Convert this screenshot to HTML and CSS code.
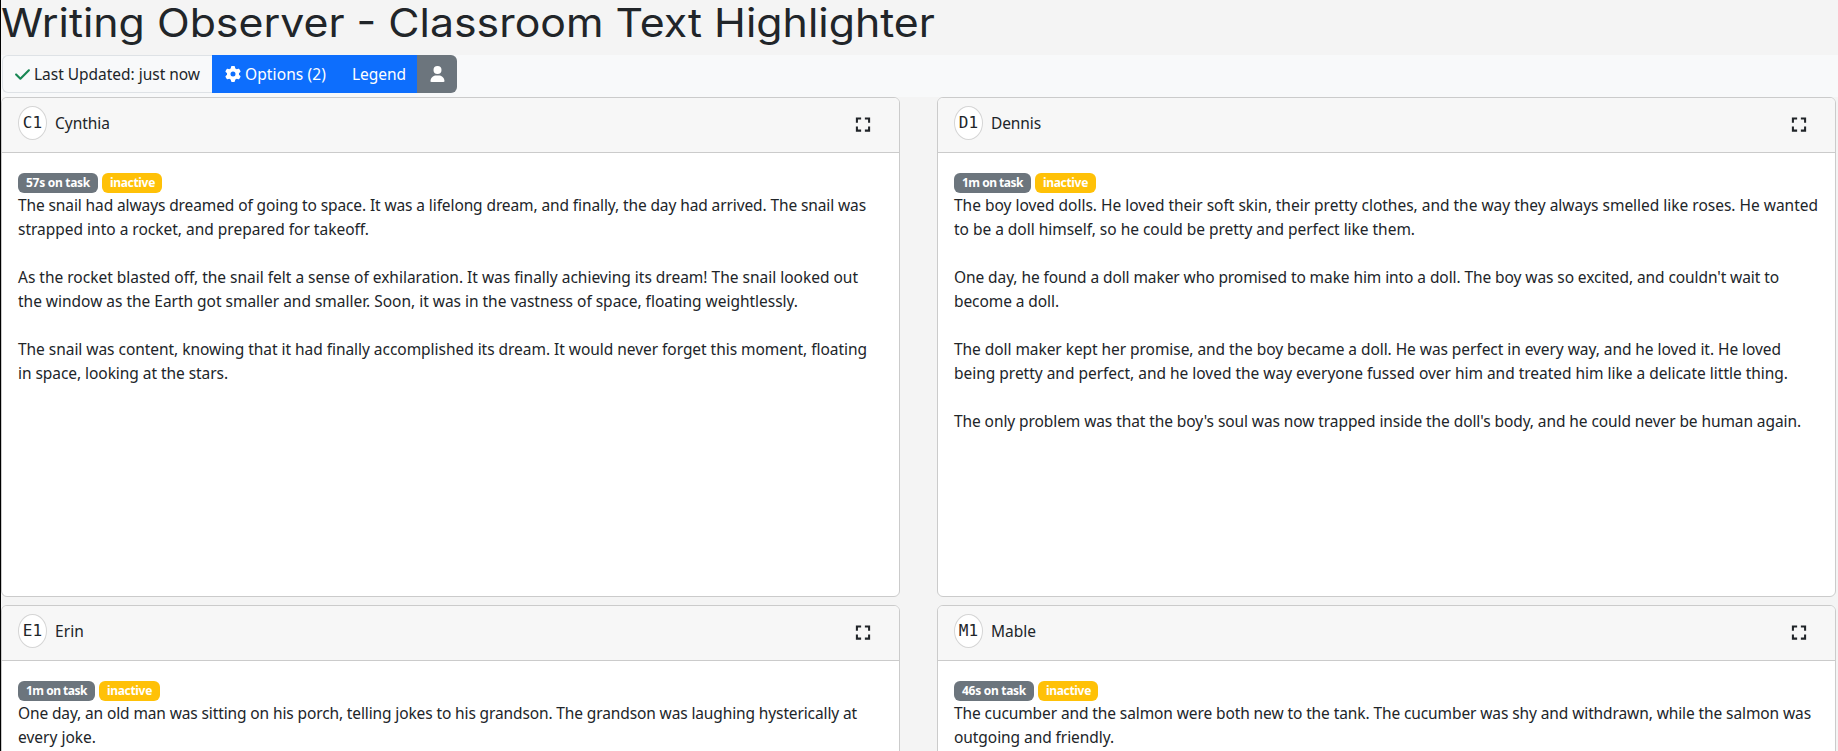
FILE: index.html
```html
<!DOCTYPE html>
<html lang="en">
<head>
<meta charset="utf-8">
<title>Writing Observer</title>
<link rel="stylesheet" href="styles.css">
</head>
<body>
<h1 class="title"><span class="title-text">Writing Observer - Classroom Text Highlighter</span></h1>
<div class="toolbar">
  <div class="status">
    <svg class="check" viewBox="0 0 448 512"><path fill="currentColor" d="M438.600 105.400c12.500 12.500 12.500 32.800 0 45.300l-256 256c-12.500 12.500-32.800 12.500-45.300 0l-128-128c-12.500-12.500-12.500-32.800 0-45.300s32.800-12.500 45.300 0L160 338.700 393.400 105.400c12.500-12.500 32.800-12.500 45.300 0z"/></svg>
    <span class="fit" data-width="166">Last Updated: just now</span>
  </div>
  <div class="btn options">
    <svg class="gear" viewBox="0 0 512 512"><path fill="currentColor" d="M495.900 166.600c3.200 8.700 .5 18.400-6.400 24.600l-43.300 39.400c1.100 8.300 1.700 16.800 1.700 25.400s-.6 17.100-1.700 25.400l43.300 39.400c6.900 6.200 9.600 15.900 6.400 24.600c-4.400 11.900-9.700 23.300-15.800 34.300l-4.700 8.100c-6.600 11-14 21.400-22.100 31.200c-5.900 7.200-15.700 9.600-24.500 6.800l-55.700-17.700c-13.400 10.300-28.200 18.900-44 25.400l-12.500 57.100c-2 9.100-9 16.300-18.200 17.800c-13.800 2.300-28 3.500-42.500 3.500s-28.700-1.200-42.500-3.500c-9.200-1.500-16.200-8.700-18.200-17.800l-12.500-57.100c-15.800-6.500-30.600-15.100-44-25.400L83.100 425.900c-8.800 2.800-18.600 .3-24.500-6.800c-8.100-9.800-15.500-20.200-22.100-31.200l-4.700-8.100c-6.100-11-11.400-22.400-15.800-34.300c-3.200-8.700-.5-18.400 6.400-24.600l43.300-39.400C64.600 273.100 64 264.600 64 256s.6-17.100 1.700-25.400L22.400 191.200c-6.900-6.200-9.600-15.900-6.400-24.600c4.400-11.900 9.700-23.300 15.800-34.300l4.700-8.100c6.600-11 14-21.400 22.100-31.200c5.900-7.200 15.700-9.600 24.500-6.800l55.700 17.700c13.400-10.300 28.200-18.900 44-25.400l12.500-57.100c2-9.100 9-16.300 18.200-17.800C227.300 1.200 241.500 0 256 0s28.700 1.200 42.500 3.500c9.200 1.500 16.200 8.700 18.200 17.800l12.500 57.100c15.800 6.500 30.600 15.100 44 25.400l55.700-17.700c8.800-2.800 18.600-.3 24.500 6.800c8.100 9.800 15.500 20.200 22.100 31.200l4.700 8.100c6.100 11 11.400 22.400 15.800 34.300zM256 336a80 80 0 1 0 0-160 80 80 0 1 0 0 160z"/></svg>
    <span class="fit" data-width="81">Options (2)</span>
  </div>
  <div class="btn legend"><span class="fit" data-width="54">Legend</span></div>
  <div class="btn user"><svg class="person" viewBox="0 0 448 512"><path fill="currentColor" d="M224 256A128 128 0 1 0 224 0a128 128 0 1 0 0 256zm-45.700 48C79.800 304 0 383.800 0 482.300C0 498.700 13.300 512 29.700 512H418.300c16.400 0 29.700-13.300 29.700-29.700C448 383.800 368.200 304 269.700 304H178.300z"/></svg></div>
</div>
<main class="grid" id="grid"></main>
<script src="app.js"></script>
</body>
</html>
```
FILE: app.js
```js
// Each line is [text, width in px]; empty entries separate paragraphs.
const students = [
  { code: "C1", name: ["Cynthia", 55], task: ["57s on task", 64, 80], inactive: 60, lines: [
    ["The snail had always dreamed of going to space. It was a lifelong dream, and finally, the day had arrived. The snail was", 848],
    ["strapped into a rocket, and prepared for takeoff.", 351], null,
    ["As the rocket blasted off, the snail felt a sense of exhilaration. It was finally achieving its dream! The snail looked out", 840],
    ["the window as the Earth got smaller and smaller. Soon, it was in the vastness of space, floating weightlessly.", 780], null,
    ["The snail was content, knowing that it had finally accomplished its dream. It would never forget this moment, floating", 849],
    ["in space, looking at the stars.", 210]] },
  { code: "D1", name: ["Dennis", 50], task: ["1m on task", 61, 77], inactive: 61, lines: [
    ["The boy loved dolls. He loved their soft skin, their pretty clothes, and the way they always smelled like roses. He wanted", 864],
    ["to be a doll himself, so he could be pretty and perfect like them.", 461], null,
    ["One day, he found a doll maker who promised to make him into a doll. The boy was so excited, and couldn't wait to", 825],
    ["become a doll.", 105], null,
    ["The doll maker kept her promise, and the boy became a doll. He was perfect in every way, and he loved it. He loved", 827],
    ["being pretty and perfect, and he loved the way everyone fussed over him and treated him like a delicate little thing.", 834], null,
    ["The only problem was that the boy's soul was now trapped inside the doll's body, and he could never be human again.", 847]] },
  { code: "E1", name: ["Erin", 29], task: ["1m on task", 61, 77], inactive: 61, lines: [
    ["One day, an old man was sitting on his porch, telling jokes to his grandson. The grandson was laughing hysterically at", 839],
    ["every joke.", 78]] },
  { code: "M1", name: ["Mable", 45], task: ["46s on task", 64, 80], inactive: 60, lines: [
    ["The cucumber and the salmon were both new to the tank. The cucumber was shy and withdrawn, while the salmon was", 857],
    ["outgoing and friendly.", 160]] },
];

const fitted = (text, width, cls = "") => `<span class="fit ${cls}" data-width="${width}">${text}</span>`;

document.getElementById("grid").innerHTML = students.map(s => `
  <section class="card">
    <header class="card-header">
      <span class="initials">${s.code}</span>
      ${fitted(...s.name, "name")}
      <svg class="expand" viewBox="0 0 16 16"><path d="M1.500 6V1.500H6M10 1.500h4.500V6M14.500 10v4.500H10M6 14.500H1.500V10" fill="none" stroke="currentColor" stroke-width="2.200"/></svg>
    </header>
    <div class="card-body">
      <div class="badges">
        <span class="badge gray" style="width:${s.task[2]}px">${fitted(s.task[0], s.task[1])}</span>
        <span class="badge yellow" style="width:${s.inactive}px">${fitted("inactive", 45)}</span>
      </div>
      ${s.lines.map(l => `<div class="line">${l ? fitted(...l) : ""}</div>`).join("")}
    </div>
  </section>`).join("");

// Distribute the remaining width of each label over its characters.
document.querySelectorAll(".fit").forEach(el => {
  const gap = Number(el.dataset.width) - el.getBoundingClientRect().width;
  el.style.letterSpacing = gap / el.textContent.length + "px";
});
```
FILE: styles.css
```css
* { box-sizing: border-box; }
body {
  margin: 0;
  height: 751px;
  overflow: hidden;
  border-left: 1px solid #000;
  background: #f4f4f4;
  color: #212529;
  font: 15.5px/24px "Noto Sans", sans-serif;
}
.title {
  margin: 0;
  height: 55px;
  font: 400 39px/45px Inter, sans-serif;
  white-space: nowrap;
}
.title-text {
  display: inline-block;
  transform: scaleX(1.098);
  transform-origin: left;
}
.toolbar {
  display: flex;
  height: 42px;
  padding-left: 1px;
  background: #f8f9fa;
}
.status, .btn {
  display: flex;
  align-items: center;
  height: 38px;
  white-space: nowrap;
}
.status {
  width: 210px;
  padding-left: 12px;
  gap: 4px;
  border: 1px solid #dee2e6;
  border-right: 0;
  border-radius: 6px 0 0 6px;
}
.check { width: 15px; height: 17px; color: #198754; }
.btn { background: #0d6efd; color: #fff; }
.options { width: 127px; padding-left: 13px; gap: 4px; }
.gear { width: 16px; height: 16px; }
.legend { width: 78px; padding-left: 13px; }
.user {
  width: 40px;
  justify-content: center;
  background: #6c757d;
  border-radius: 0 6px 6px 0;
}
.person { width: 15px; height: 16px; }
.grid {
  display: grid;
  grid-template-columns: 899px 899px;
  grid-auto-rows: 500px;
  column-gap: 37px;
  row-gap: 8px;
  height: 654px;
  overflow: hidden;
}
.card {
  border: 1px solid #cbcbcb;
  border-radius: 6px;
  background: #fff;
  overflow: hidden;
}
.card-header {
  display: flex;
  height: 55px;
  padding: 8px 28px 0 16px;
  border-bottom: 1px solid #cbcbcb;
  background: #f7f7f7;
}
.initials {
  width: 29px;
  height: 34px;
  border: 1px solid #d5d5d5;
  border-radius: 50%;
  background: #fff;
  font: 16px/32px "DejaVu Sans Mono", monospace;
  text-align: center;
}
.name { margin-left: 8px; line-height: 34px; }
.expand { width: 16px; height: 15px; margin: 11px 0 0 auto; }
.card-body { padding: 16px; }
.badges { display: flex; gap: 4px; height: 24px; padding-top: 4px; }
.badge {
  height: 20px;
  border-radius: 6px;
  padding-left: 8px;
  color: #fff;
  font-size: 12px;
  font-weight: 700;
  line-height: 19px;
  white-space: nowrap;
}
.gray { background: #6c757d; }
.yellow { background: #ffc107; }
.line { height: 24px; white-space: nowrap; }
```
